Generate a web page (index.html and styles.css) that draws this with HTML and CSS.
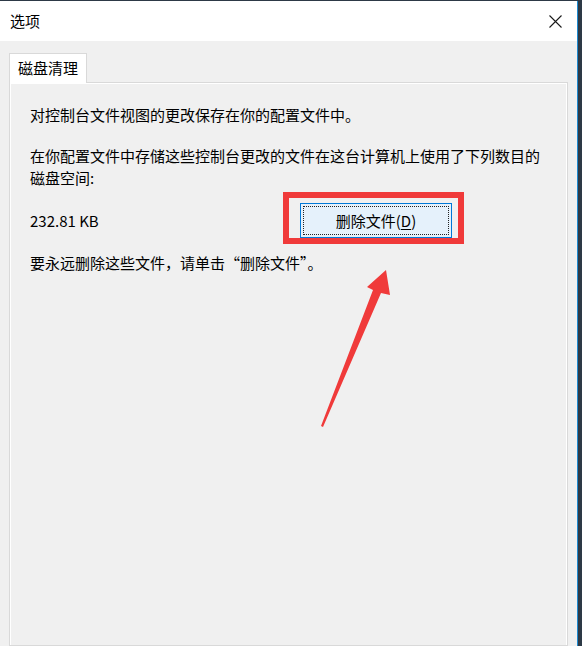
FILE: index.html
```html
<!DOCTYPE html>
<html>
<head>
<meta charset="UTF-8">
<link rel="stylesheet" href="styles.css">
<title>选项</title>
</head>
<body>
	<div class="window">
		<div class="titlebar">
			<span class="title">选项</span>
			<span class="close" title="关闭">
				<svg width="13" height="13" viewBox="0 0 13 13">
					<path d="M0.5 0.5 L12.5 12.5 M12.5 0.5 L0.5 12.5" stroke="#1a1a1a" stroke-width="1.1" fill="none"/>
				</svg>
			</span>
		</div>
		<div class="content">
			<div class="tabs">
				<div class="tab active">磁盘清理</div>
			</div>
			<div class="panel">
				<p class="line">对控制台文件视图的更改保存在你的配置文件中。</p>
				<p class="line gap">在你配置文件中存储这些控制台更改的文件在这台计算机上使用了下列数目的<br>磁盘空间:</p>
				<div class="sizeRow">
					<span class="size">232.81 KB</span>
					<span class="highlight">
						<button class="btn"><span class="focus">删除文件(<u>D</u>)</span></button>
					</span>
				</div>
				<p class="line hint">要永远删除这些文件，请单击“删除文件”。</p>
			</div>
		</div>
		<svg class="arrow" width="80" height="165" viewBox="0 0 80 165">
			<polygon points="6,161 58,25 52,22 71,5 75,30 66,28 8,162" fill="#f03a3a"/>
		</svg>
	</div>
</body>
</html>
```
FILE: styles.css
```css
body{
	margin: 0;
	background: #2d3946;
	font-family: "Microsoft YaHei", "Noto Sans CJK SC", sans-serif;
	font-size: 15px;
	color: #000;
	overflow: hidden;
}

.window{
	position: relative;
	width: 577px;
	height: 645px;
	margin-top: 1px;
	border-right: 1px solid #1e8ad0;
	background: #f0f0f0;
	display: flex;
	flex-direction: column;
}

.titlebar{
	height: 40px;
	background: #ffffff;
	display: flex;
	align-items: center;
	justify-content: space-between;
	padding: 0 15px 0 10px;
	flex-shrink: 0;
}

.title{
	line-height: 20px;
}

.close{
	display: flex;
	align-items: center;
}

.content{
	flex: 1;
	padding: 12px 9px 0 9px;
	display: flex;
	flex-direction: column;
}

.tabs{
	display: flex;
	height: 29px;
}

.tab{
	position: relative;
	z-index: 1;
	padding: 0 8px 0 8px;
	line-height: 28px;
	background: #ffffff;
	border: 1px solid #d9d9d9;
	border-bottom: none;
	margin-bottom: -1px;
}

.panel{
	flex: 1;
	border: 1px solid #d9d9d9;
	box-shadow: inset 1px 1px 0 #ffffff, inset -1px 0 0 #ffffff;
	padding: 21px 20px 0 20px;
}

.line{
	margin: 0;
	line-height: 22px;
}

.gap{
	margin-top: 19px;
}

.sizeRow{
	display: flex;
	align-items: center;
	margin-top: 14px;
	height: 35px;
}

.size{
	width: 270px;
	line-height: 22px;
}

.highlight{
	position: relative;
	display: inline-flex;
}

.highlight::before{
	content: "";
	position: absolute;
	left: -17px;
	right: -12px;
	top: -11px;
	bottom: -6px;
	border: 6px solid #f03a3a;
}

.btn{
	width: 152px;
	height: 35px;
	padding: 2px;
	background: #e5f1fb;
	border: 1px solid #0078d7;
	font-family: inherit;
	font-size: 15px;
	color: #000;
	display: flex;
}

.focus{
	flex: 1;
	border: 1px dotted #222;
	display: flex;
	align-items: center;
	justify-content: center;
}

.focus u{
	text-underline-offset: 2px;
}

.hint{
	margin-top: 14px;
}

.arrow{
	position: absolute;
	left: 315px;
	top: 264px;
}
```
